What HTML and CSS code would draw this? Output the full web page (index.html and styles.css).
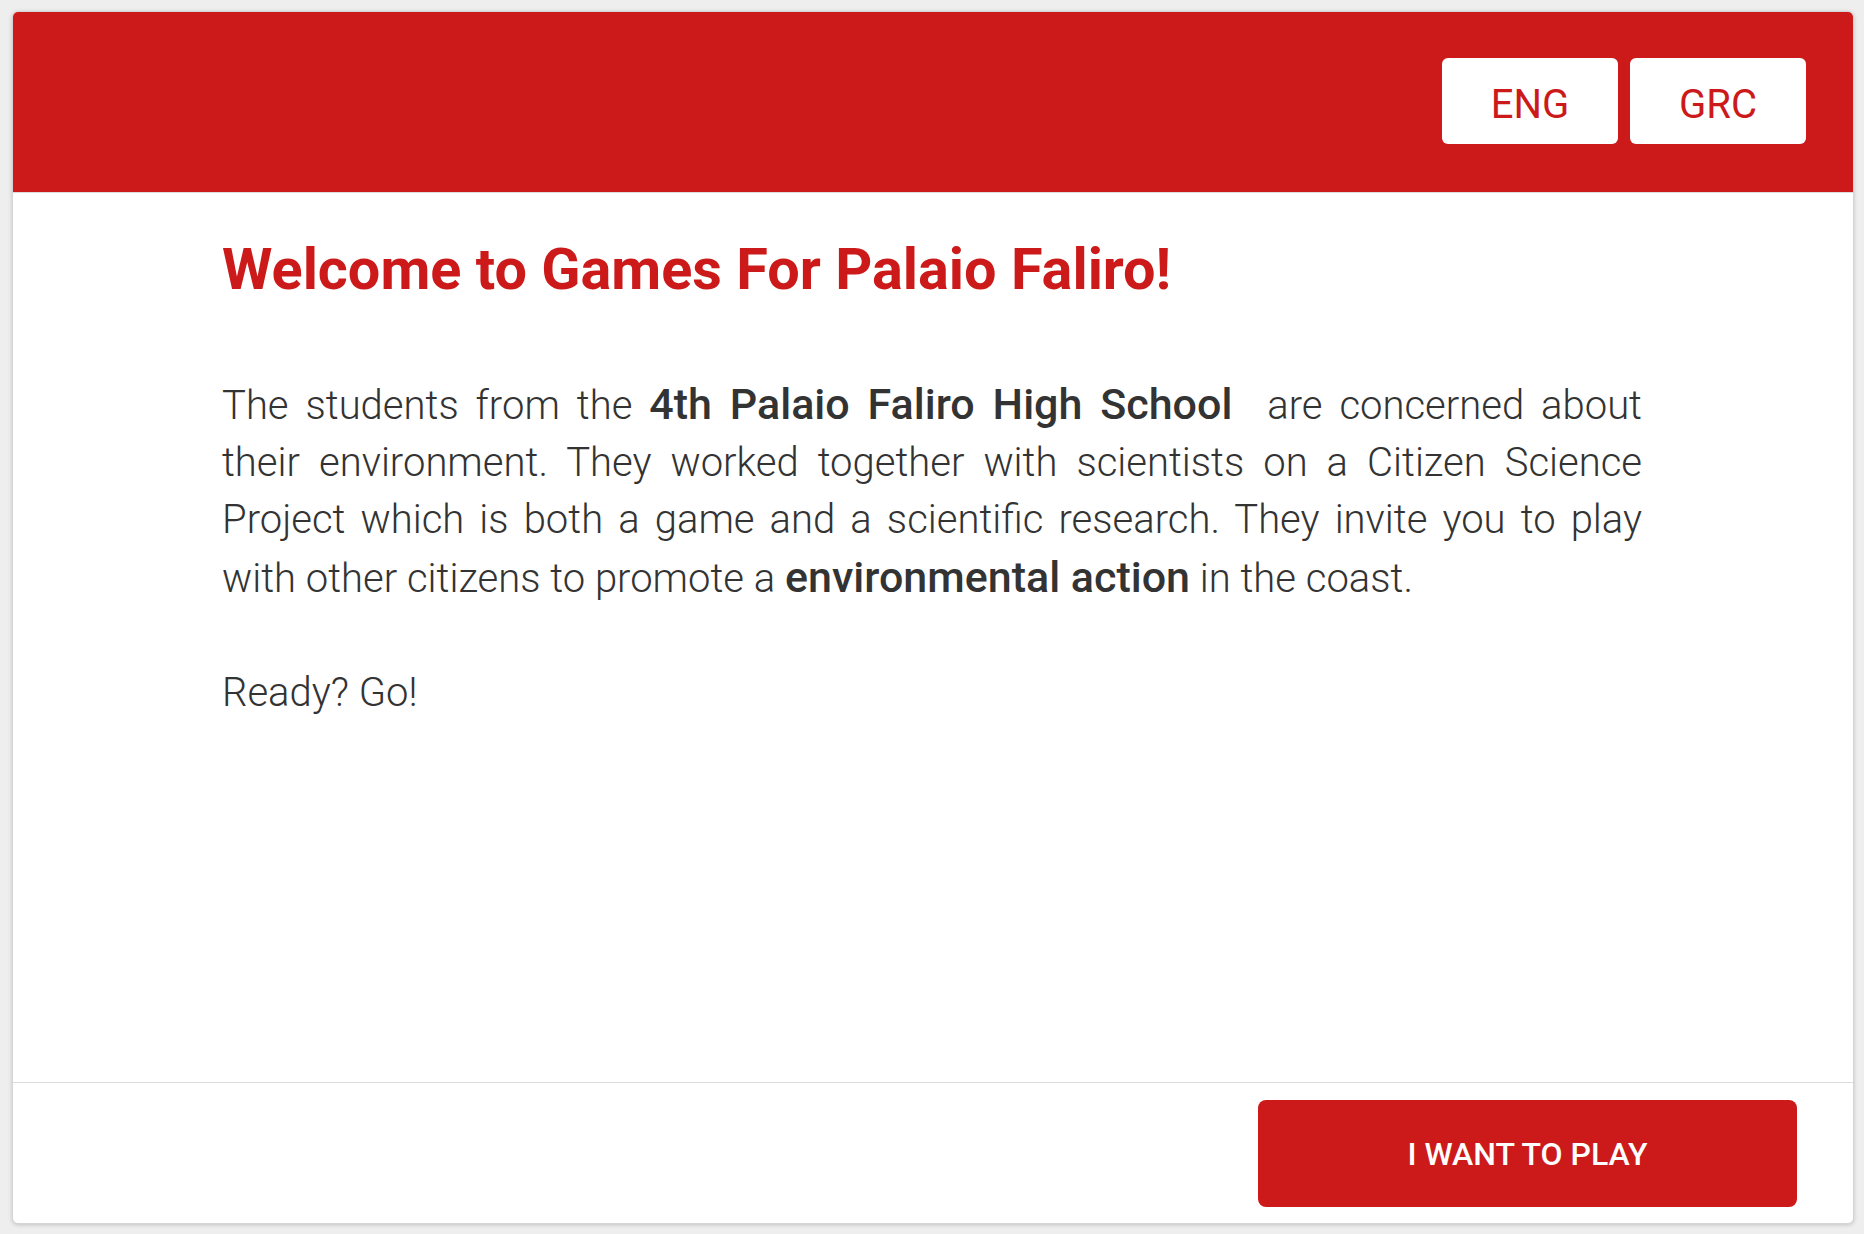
FILE: index.html
```html
<!DOCTYPE html>
<html lang="en">
<head>
<meta charset="utf-8">
<title>Games For Palaio Faliro</title>
<link rel="stylesheet" href="styles.css">
</head>
<body>
<div class="card">
  <header class="card-header">
    <button class="lang-btn">ENG</button>
    <button class="lang-btn">GRC</button>
  </header>
  <main class="card-body">
    <div class="content">
      <h1 class="title">Welcome to Games For Palaio Faliro!</h1>
      <p class="text">The students from the <strong>4th Palaio Faliro High School&nbsp;</strong> are concerned about their environment. They worked together with scientists on a Citizen Science Project which is both a game and a scientific research. They invite you to play with other citizens to promote a <strong>environmental action</strong> in the coast.</p>
      <p class="text">Ready? Go!</p>
    </div>
  </main>
  <footer class="card-footer">
    <button class="play-btn">I WANT TO PLAY</button>
  </footer>
</div>
</body>
</html>
```

FILE: styles.css
```css
html, body {
  margin: 0;
  padding: 0;
}
body {
  background: #eeeeee;
  font-family: Roboto, "Liberation Sans", Arial, sans-serif;
  height: 1234px;
  box-sizing: border-box;
  padding: 11px 10px 10px 12px;
}
.card {
  box-sizing: border-box;
  height: 1213px;
  background: #ffffff;
  border: 1px solid #d5d5d5;
  border-radius: 6px;
  box-shadow: 0 1px 4px rgba(0, 0, 0, 0.18);
  overflow: hidden;
  display: flex;
  flex-direction: column;
}
.card-header {
  background: #cc1a1a;
  height: 181px;
  box-sizing: border-box;
  border-bottom: 1px solid #dcdcdc;
  display: flex;
  justify-content: flex-end;
  align-items: flex-start;
  gap: 12px;
  padding: 46px 47px 0 0;
  flex: none;
}
.lang-btn {
  width: 176px;
  height: 86px;
  border: none;
  border-radius: 6px;
  background: #ffffff;
  color: #cc1a1a;
  font-family: Roboto, "Liberation Sans", Arial, sans-serif;
  font-size: 40px;
  font-weight: 400;
  padding: 7px 0 0 0;
  cursor: pointer;
}
.card-body {
  flex: 1;
}
.content {
  max-width: 1420px;
  margin: 0 auto;
  padding: 44px 2px 0 0;
}
.title {
  margin: 0 0 73px 0;
  color: #cc1a1a;
  font-size: 57.6px;
  line-height: 66px;
  font-weight: 700;
}
.text {
  margin: 0 0 57px 0;
  color: #333333;
  font-size: 40px;
  line-height: 57.2px;
  font-weight: 300;
  text-align: justify;
}
.text strong {
  font-weight: 500;
  font-size: 43px;
}
.card-footer {
  flex: none;
  height: 141px;
  box-sizing: border-box;
  border-top: 1px solid #dcdcdc;
  display: flex;
  justify-content: flex-end;
  align-items: flex-start;
  padding: 17px 56px 0 0;
}
.play-btn {
  width: 539px;
  height: 107px;
  border: none;
  border-radius: 8px;
  background: #cc1a1a;
  color: #ffffff;
  font-family: Roboto, "Liberation Sans", Arial, sans-serif;
  font-size: 32px;
  font-weight: 500;
  padding: 0;
  cursor: pointer;
}
```
